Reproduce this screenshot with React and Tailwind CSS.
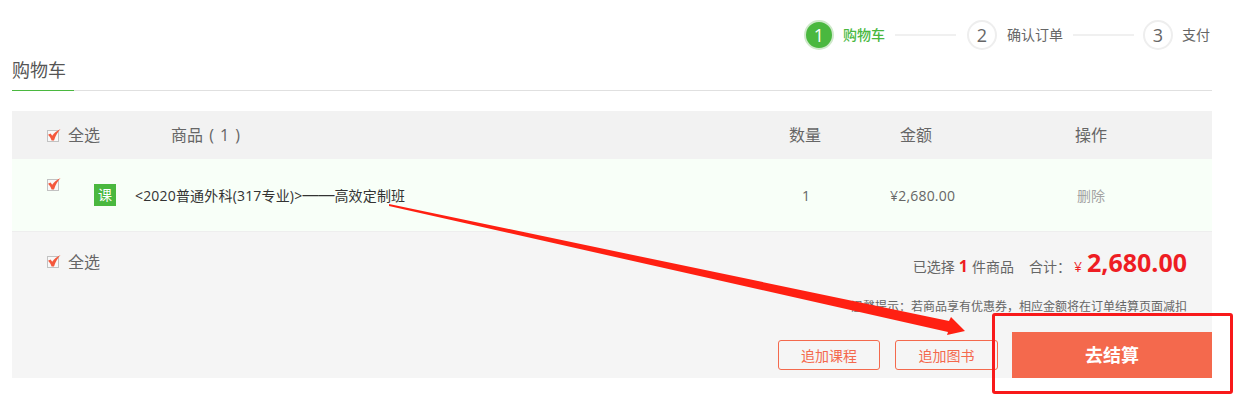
import React from 'react'

const Check = ({ className = '' }) => (
  <svg width="14" height="13" viewBox="0 0 14 13" fill="none" className={`shrink-0 ${className}`}>
    <rect x="0.5" y="1.5" width="11" height="11" fill="#f8f8f8" stroke="#c2c2c2" />
    <path d="M1 5.8 3.6 4.4 5.2 6.8C7.2 4 9.6 1.8 13.6 0 10.8 3 8.6 6.6 7 11.4H4.6C3.8 9.2 2.6 7.4 1 5.8Z" fill="#f4583c" />
  </svg>
)

const Step = ({ num, label, active, width, children }) => (
  <div className="flex items-center h-[30px]">
    {active ? (
      <div className="w-[30px] h-[30px] rounded-full bg-[#4ab83f] border-2 border-[#cfe9cb] flex items-center justify-center text-white text-[18px] leading-none">{num}</div>
    ) : (
      <div className="w-[30px] h-[30px] rounded-full bg-white border-2 border-[#eeeeee] flex items-center justify-center text-[#666] text-[18px] leading-none">{num}</div>
    )}
    <span className={`${width} text-[14px] leading-none ${active ? 'text-[#4ab83f] font-medium' : 'text-[#666]'}`}>{label}</span>
    {children}
  </div>
)

const App = () => {
  return (
    <div className="relative w-[1240px] h-[405px] bg-white overflow-hidden font-['Open_Sans','Noto_Sans_CJK_SC',sans-serif]">
      <div className="w-[1200px] ml-3">
        <div className="h-[60px] pt-5 flex items-start justify-end pr-[2px]">
          <Step num="1" label="购物车" active width="ml-[9px]">
            <div className="w-[61px] h-[2px] bg-[#f0f0f0] ml-[10px] mr-[11px]" />
          </Step>
          <Step num="2" label="确认订单" width="ml-[10px]">
            <div className="w-[61px] h-[2px] bg-[#f0f0f0] ml-[10px] mr-[9px]" />
          </Step>
          <Step num="3" label="支付" width="ml-[9px]" />
        </div>

        <div className="h-[31px] border-b border-[#e0e0e0] relative">
          <span className="text-[18px] leading-[20px] text-[#555] block">购物车</span>
          <div className="absolute left-0 -bottom-px w-[62px] h-px bg-[#4ab83f]" />
        </div>

        <div className="mt-5 h-[48px] bg-[#f2f2f2] flex items-center text-[16px] text-[#666] pl-[35px]">
          <Check />
          <span className="ml-[7px] w-[103px]">全选</span>
          <span className="w-[618px] [word-spacing:2px]">商品 ( 1 )</span>
          <span className="w-[32px] text-center">数量</span>
          <span className="w-[32px] ml-[79px] text-center">金额</span>
          <span className="w-[32px] ml-[143px] text-center">操作</span>
        </div>

        <div className="h-[73px] bg-[#f8fff8] border-b border-[#eeeeee] flex pl-[35px] text-[14px]">
          <Check className="mt-[19px]" />
          <div className="mt-[25px] ml-[33px] w-[22px] h-[22px] bg-[#4ab83f] text-white text-[14px] flex items-center justify-center leading-none">课</div>
          <div className="ml-[19px] w-[667px] flex items-center text-[#333] tracking-[0.18px]">
            &lt;2020普通外科(317专业)&gt;
            <span className="font-['Liberation_Sans'] text-[16px] tracking-normal">——</span>
            高效定制班
          </div>
          <div className="w-[8px] flex items-center justify-center text-[#666]">1</div>
          <div className="w-[65px] ml-[80px] flex items-center text-[#666] whitespace-nowrap tracking-[0.2px]">¥2,680.00</div>
          <div className="ml-[122px] flex items-center text-[#a3a3a3]">删除</div>
        </div>

        <div className="h-[146px] bg-[#f5f5f5] flex justify-between">
          <div className="flex items-start pl-[35px] pt-[23px] text-[16px] text-[#666]">
            <Check />
            <span className="ml-[7px] leading-[20px] -mt-[3px]">全选</span>
          </div>
          <div className="flex flex-col items-end">
            <div className="flex items-baseline h-[36px] mt-[18px] pr-[25px] text-[14px] text-[#666]">
              <span>已选择</span>
              <span className="mx-[4px] text-[16px] font-bold text-[#ee1d23]">1</span>
              <span>件商品</span>
              <span className="ml-[15px] mr-[3px]">合计：</span>
              <span className="text-[14px] text-[#ee1d23]">¥</span>
              <span className="ml-[5px] text-[25px] font-bold text-[#ee1d23] leading-none">2,680.00</span>
            </div>
            <div className="mt-[12px] pr-[25px] text-[12px] leading-[18px] text-[#666] whitespace-nowrap">温馨提示：若商品享有优惠券，相应金额将在订单结算页面减扣</div>
            <div className="flex mt-[16px]">
              <button className="w-[102px] h-[30px] mt-[8px] border border-[#f4694d] rounded-[3px] text-[14px] text-[#f4694d]">追加课程</button>
              <button className="w-[103px] h-[30px] mt-[8px] ml-[15px] border border-[#f4694d] rounded-[3px] text-[14px] text-[#f4694d]">追加图书</button>
              <button className="w-[200px] h-[46px] ml-[14px] bg-[#f4694d] text-white text-[18px] font-bold">去结算</button>
            </div>
          </div>
        </div>
      </div>

      {/* annotation drawn over the screenshot */}
      <svg className="absolute left-0 top-0 pointer-events-none" width="1240" height="405" viewBox="0 0 1240 405">
        <polygon points="389,204 949,321 951,317 965,331 947,335 948,332 389,206" fill="#ff2012" />
      </svg>
      <div className="absolute left-[992px] top-[313px] w-[241px] h-[81px] border-[3px] border-[#f8191a] rounded-[3px] pointer-events-none" />
    </div>
  )
}

export default App
